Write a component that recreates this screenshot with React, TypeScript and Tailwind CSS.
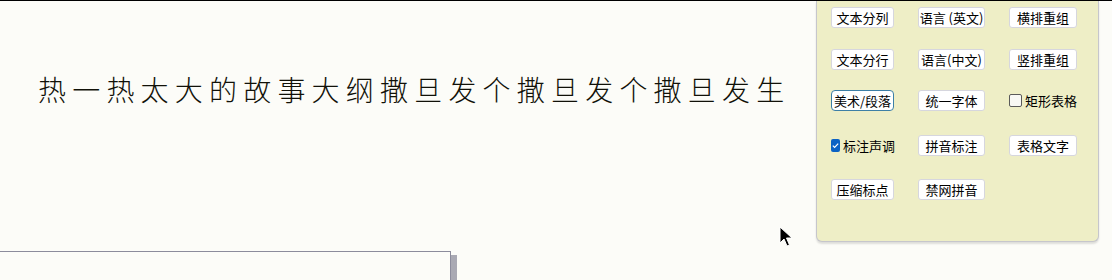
import React from "react";

const font = { fontFamily: '"Noto Sans CJK SC", "Noto Sans", sans-serif' };

function Btn({ label, w, focus }: { label: string; w: string; focus?: boolean }) {
  return (
    <button
      className={
        "h-[21px] flex items-center justify-center bg-white text-[13px] leading-none text-black whitespace-nowrap " +
        w +
        (focus ? " border border-[#3d7fa6] rounded-[4px]" : " border border-[#d6d6de] rounded-[3px]")
      }
    >
      {label}
    </button>
  );
}

function Check({ label, checked }: { label: string; checked?: boolean }) {
  return (
    <label className="h-[21px] flex items-center gap-[3px] text-[13px] leading-none text-black whitespace-nowrap">
      {checked ? (
        <span className="w-[13px] h-[13px] rounded-[2px] bg-[#0b62c4] flex items-center justify-center">
          <svg width="9" height="9" viewBox="0 0 10 10" fill="none">
            <path d="M2 5.2l2 2 4-4.4" stroke="white" strokeWidth="1.3" />
          </svg>
        </span>
      ) : (
        <span className="w-[13px] h-[13px] rounded-[2px] border border-[#5a5a5a] bg-[#f8f8f4]" />
      )}
      {label}
    </label>
  );
}

export default function App() {
  return (
    <div
      className="relative w-[1112px] h-[280px] overflow-hidden bg-[#fcfcf8] border-t border-black flex"
      style={font}
    >
      {/* left editing area */}
      <div className="flex-1 min-w-0 flex flex-col">
        <div className="pt-[74px] pl-[38px] text-[28px] leading-[28px] tracking-[6.2px] text-[#111108] font-light whitespace-nowrap">
          热一热太大的故事大纲撒旦发个撒旦发个撒旦发生
        </div>
        <div className="mt-[148px] w-[451px] h-[60px] border-t border-r border-[#8c8c9c] shadow-[6px_4px_0_#a9a9b3]" />
      </div>

      {/* tool panel */}
      <div className="shrink-0 w-[283px] mr-[13px] h-[241px] bg-[#eeeec6] border-x border-b border-[#c6c6cc] rounded-b-[6px] shadow-[0_2px_2px_rgba(0,0,0,0.12)] pl-[14px] pt-[6px] flex flex-col">
        <div className="flex gap-x-6">
          <Btn label="文本分列" w="w-[63px]" />
          <Btn label="语言 (英文)" w="w-[67px]" />
          <Btn label="横排重组" w="w-[68px]" />
        </div>
        <div className="flex gap-x-6 mt-[21px]">
          <Btn label="文本分行" w="w-[63px]" />
          <Btn label="语言(中文)" w="w-[67px]" />
          <Btn label="竖排重组" w="w-[68px]" />
        </div>
        <div className="flex gap-x-6 mt-[20px]">
          <Btn label="美术/段落" w="w-[63px]" focus />
          <Btn label="统一字体" w="w-[67px]" />
          <div className="w-[68px]">
            <Check label="矩形表格" />
          </div>
        </div>
        <div className="flex gap-x-6 mt-[24px]">
          <div className="w-[63px]">
            <Check label="标注声调" checked />
          </div>
          <Btn label="拼音标注" w="w-[67px]" />
          <Btn label="表格文字" w="w-[68px]" />
        </div>
        <div className="flex gap-x-6 mt-[23px]">
          <Btn label="压缩标点" w="w-[63px]" />
          <Btn label="禁网拼音" w="w-[67px]" />
        </div>
      </div>

      {/* mouse pointer */}
      <svg className="absolute left-[779px] top-[225px]" width="14" height="22" viewBox="0 0 14 22">
        <path d="M1 1v16l4-4 3 7 2.5-1-3-7h5.5z" fill="black" stroke="white" strokeWidth="1" />
      </svg>
    </div>
  );
}
